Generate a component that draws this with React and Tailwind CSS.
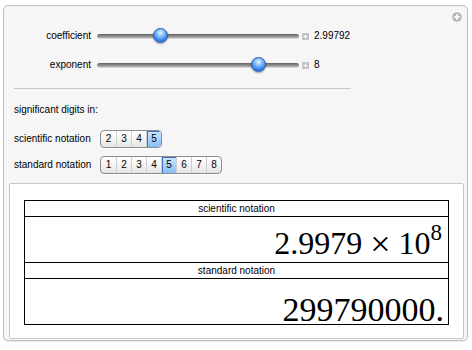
import React from "react";

function Slider({ thumbLeft }) {
  return (
    <div className="relative w-[202px] h-[16px] flex items-center">
      <div className="w-full h-[5px] rounded-full bg-[linear-gradient(#5e5e5e,#8a8a8a_50%,#b4b4b4)] border-b border-[#d8d8d8]" />
      <div
        className="absolute top-0 w-[15px] h-[15px] rounded-full border border-[#2457b8] bg-[radial-gradient(circle_at_50%_30%,#eaf5ff_0%,#8cc3fb_30%,#3c86ea_65%,#1a58cc_100%)] shadow-[0_1px_2px_rgba(0,0,0,0.35)]"
        style={{ left: thumbLeft }}
      />
    </div>
  );
}

function SmallPlus() {
  return (
    <svg width="7" height="7" viewBox="0 0 7 7" className="block">
      <rect x="0" y="0" width="7" height="7" rx="1" fill="#c2c2c2" />
      <rect x="3" y="1.5" width="1" height="4" fill="#fff" />
      <rect x="1.5" y="3" width="4" height="1" fill="#fff" />
    </svg>
  );
}

function ControlRow({ label, thumbLeft, value, className }) {
  return (
    <div className={"h-[16px] flex items-center " + className}>
      <div className="w-[87px] text-right text-[10px] leading-[16px] text-black">{label}</div>
      <div className="ml-[6px]">
        <Slider thumbLeft={thumbLeft} />
      </div>
      <div className="ml-[3px]">
        <SmallPlus />
      </div>
      <div className="ml-[5px] text-[10px] leading-[16px] text-black">{value}</div>
    </div>
  );
}

function ButtonGroup({ items, selected }) {
  return (
    <div className="flex h-[18px] rounded-[4px] border border-[#8c8c8c] overflow-hidden bg-[linear-gradient(#ffffff,#f4f4f4_50%,#e4e4e4)] shadow-[0_1px_0_rgba(255,255,255,0.8)]">
      {items.map((n, i) => {
        const sel = n === selected;
        return (
          <div
            key={n}
            className={
              "w-[15px] h-[16px] flex items-center justify-center text-[10px] leading-[16px] text-black " +
              (i > 0 ? "border-l border-[#cfcfcf] " : "") +
              (sel
                ? "bg-[linear-gradient(#cfe7fe,#a9d2fb_50%,#86bff7)] shadow-[inset_1px_1px_0_#3f70c4] "
                : "")
            }
          >
            {n}
          </div>
        );
      })}
    </div>
  );
}

export default function App() {
  return (
    <div className="w-[472px] h-[350px] bg-white pt-[5px] pl-[3px] font-['Liberation_Sans',Arial,sans-serif]">
      <div className="relative w-[465px] h-[336px] rounded-[5px] border border-[#bfbfbf] bg-[#f6f6f6] shadow-[0_1px_1px_rgba(0,0,0,0.08)] flex flex-col">
        <div className="absolute top-[6px] right-[5px]">
          <svg width="10" height="10" viewBox="0 0 10 10" className="block">
            <circle cx="5" cy="5" r="4.8" fill="#b5b5b5" />
            <rect x="4.2" y="2" width="1.6" height="6" fill="#fff" />
            <rect x="2" y="4.2" width="6" height="1.6" fill="#fff" />
          </svg>
        </div>

        <ControlRow className="mt-[22px]" label="coefficient" thumbLeft={56} value="2.99792" />
        <ControlRow className="mt-[13px]" label="exponent" thumbLeft={154} value="8" />

        <div className="mt-[15px] ml-[10px] w-[337px] h-px bg-[#c6c6c6]" />

        <div className="mt-[14px] ml-[10px] h-[14px] text-[10px] leading-[14px] text-black">
          significant digits in:
        </div>

        <div className="mt-[13px] ml-[10px] flex items-center">
          <div className="w-[86px] text-[10px] leading-[18px] text-black">scientific notation</div>
          <ButtonGroup items={[2, 3, 4, 5]} selected={5} />
        </div>

        <div className="mt-[8px] ml-[10px] flex items-center">
          <div className="w-[86px] text-[10px] leading-[18px] text-black">standard notation</div>
          <ButtonGroup items={[1, 2, 3, 4, 5, 6, 7, 8]} selected={5} />
        </div>

        <div className="mt-[9px] ml-[5px] w-[455px] h-[156px] bg-white border border-[#c8c8c8] rounded-[2px] pl-[14px] pt-[16px]">
          <div className="w-[425px] border border-black flex flex-col">
            <div className="h-[15px] text-[10px] leading-[15px] text-center text-black">scientific notation</div>
            <div className="h-[46px] border-t border-black flex items-end justify-end pr-[6px]">
              <div className="font-['Liberation_Serif','Times_New_Roman',serif] text-[32px] leading-[28px] text-black whitespace-nowrap">
                2.9979<span className="mx-[8px] text-[36px] leading-none align-[-2px]">×</span>10
                <span className="text-[23px] leading-none align-[14px]">8</span>
              </div>
            </div>
            <div className="h-[16px] border-t border-black text-[10px] leading-[15px] text-center text-black">standard notation</div>
            <div className="h-[46px] border-t border-black flex items-end justify-end pr-[4px]">
              <div className="font-['Liberation_Serif','Times_New_Roman',serif] text-[34px] leading-[28px] text-black whitespace-nowrap">
                299790000.
              </div>
            </div>
          </div>
        </div>
      </div>
    </div>
  );
}
